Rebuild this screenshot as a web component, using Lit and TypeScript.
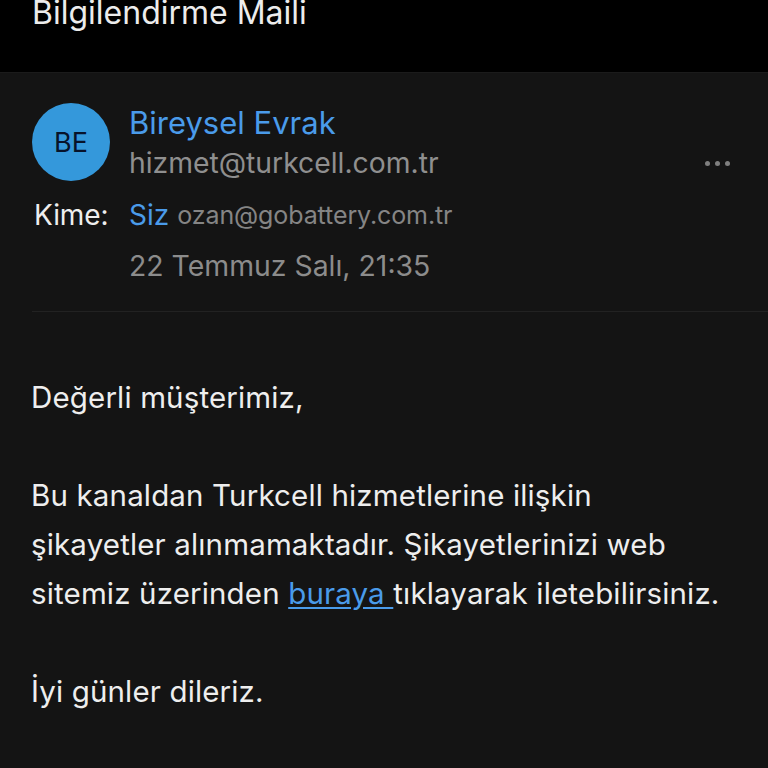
import { LitElement, html, css } from "lit";
import { customElement } from "lit/decorators.js";

@customElement("app-root")
export class AppRoot extends LitElement {
  static styles = css`
    :host { display: block; width: 768px; height: 768px; overflow: hidden; background: #141414;
      font-family: Inter, "Noto Sans", sans-serif; color: #f2f2f2; }
    .top { height: 73px; box-sizing: border-box; background: #000; border-bottom: 1px solid #1b1b1b;
      padding: 0 32px 41px; display: flex; align-items: flex-end; overflow: hidden; }
    .title { font-size: 32px; line-height: 36px; white-space: nowrap; color: #ececec; }
    .head { margin-left: 32px; height: 239px; box-sizing: border-box; padding-top: 30px; border-bottom: 1px solid #222; position: relative; }
    .sender { display: flex; gap: 19px; height: 78px; }
    .avatar { width: 78px; height: 78px; border-radius: 50%; background: #3498db; color: #07132b;
      display: flex; align-items: center; justify-content: center; font-size: 27px; flex: none; }
    .who { display: flex; flex-direction: column; }
    .name { font-size: 31px; line-height: 40px; color: #4a9bea; }
    .mail { font-size: 28.3px; line-height: 41px; color: #8f8f8f; }
    .more { position: absolute; right: 38px; top: 88px; display: flex; gap: 5px; }
    .more i { width: 5px; height: 5px; border-radius: 50%; background: #7f7f7f; display: block; }
    .to { display: flex; align-items: baseline; margin-top: 17px; height: 39px; }
    .label { width: 97px; padding-left: 2px; box-sizing: border-box; font-size: 28px; color: #eee; letter-spacing: -0.1px; }
    .siz { font-size: 28px; color: #4a9bea; margin-right: 8px; }
    .addr { font-size: 25px; color: #858585; letter-spacing: -0.1px; vertical-align: 1px; }
    .date { margin-left: 97px; margin-top: 9px; font-size: 28.4px; line-height: 40px; color: #8c8c8c; }
    .body { padding: 61px 31px 0; font-size: 29.5px; line-height: 49px; color: #eeeeee; letter-spacing: 0.15px; }
    .body p { margin: 0 0 49px; white-space: nowrap; }
    a { color: #4a9bea; text-decoration: underline; text-underline-offset: 3px; }
  `;

  render() {
    return html`
      <div class="top"><div class="title">Bilgilendirme Maili</div></div>
      <div class="head">
        <div class="sender">
          <div class="avatar">BE</div>
          <div class="who">
            <div class="name">Bireysel Evrak</div>
            <div class="mail">hizmet@turkcell.com.tr</div>
          </div>
        </div>
        <div class="more"><i></i><i></i><i></i></div>
        <div class="to">
          <div class="label">Kime:</div>
          <div><span class="siz">Siz</span><span class="addr">ozan@gobattery.com.tr</span></div>
        </div>
        <div class="date">22 Temmuz Salı, 21:35</div>
      </div>
      <div class="body">
        <p>Değerli müşterimiz,</p>
        <p>Bu kanaldan Turkcell hizmetlerine ilişkin<br />şikayetler alınmamaktadır. Şikayetlerinizi web<br />sitemiz üzerinden <a href="#">buraya </a>tıklayarak iletebilirsiniz.</p>
        <p>İyi günler dileriz.</p>
      </div>
    `;
  }
}
